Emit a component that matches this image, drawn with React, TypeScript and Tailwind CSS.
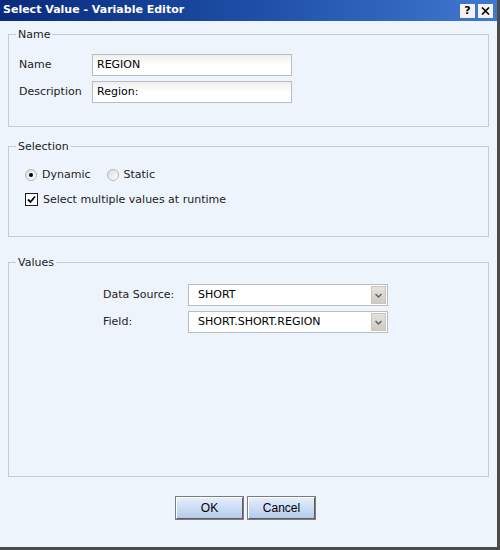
import React, { useState } from 'react';

const FONT = { fontFamily: '"DejaVu Sans", Verdana, sans-serif' };

function SelectBox({ value }: { value: string }) {
  return (
    <div className="flex h-[22px] w-[200px] items-stretch border border-[#b9bcc2] bg-white p-px">
      <span className="flex-1 pl-2 text-[11px] leading-[18px] text-black">{value}</span>
      <span className="flex w-[15px] items-center justify-center border border-[#c9c5bc] bg-gradient-to-b from-[#e6e3dc] to-[#cfcbc2]">
        <svg width="7" height="5" viewBox="0 0 7 5">
          <path d="M0.5 1 L3.5 4 L6.5 1" fill="none" stroke="#55606e" strokeWidth="1.4" />
        </svg>
      </span>
    </div>
  );
}

function TextBox({ value }: { value: string }) {
  return (
    <div className="h-[22px] w-[200px] border border-[#b9bcc2] bg-gradient-to-b from-[#efefed] via-white to-white pl-1 text-[11px] leading-[20px] text-black">
      {value}
    </div>
  );
}

function Group({ title, className, children }: { title: string; className: string; children?: React.ReactNode }) {
  return (
    <fieldset className={`mx-2 border border-[#c6cad2] ${className}`}>
      <legend className="ml-[7px] px-[2px] text-[11px] leading-[13px] text-[#222]">{title}</legend>
      {children}
    </fieldset>
  );
}

function DialogButton({ label }: { label: string }) {
  return (
    <button className="h-[22px] w-[67px] border border-t-white border-l-white border-r-[#5e5e5e] border-b-[#5e5e5e] bg-gradient-to-b from-[#e4eefc] to-[#b5cbec] text-[12px] text-black outline outline-1 outline-[#7c7c7c]"
      style={{ fontFamily: '"Liberation Sans", Arial, sans-serif' }}>
      {label}
    </button>
  );
}

function Radio({ checked }: { checked: boolean }) {
  return (
    <span className="flex h-[12px] w-[12px] items-center justify-center rounded-full border border-[#b6b6b6] bg-gradient-to-br from-[#dcdcdc] to-white">
      {checked && <span className="h-[4px] w-[4px] rounded-full bg-black" />}
    </span>
  );
}

export default function App() {
  const [mode, setMode] = useState<'dynamic' | 'static'>('dynamic');
  const [multi, setMulti] = useState(true);

  return (
    <div className="flex h-[550px] w-[500px] flex-col border-r-[3px] border-b-[3px] border-r-[#4a4a4a] border-b-[#4a4a4a] bg-[#eef4fc]" style={FONT}>
      {/* title bar */}
      <div className="flex h-[21px] items-center justify-between bg-gradient-to-r from-[#0a2a7c] via-[#1d4ea6] to-[#4178cf] pl-[3px] pr-[4px]">
        <span className="text-[11px] font-bold text-white">Select Value - Variable Editor</span>
        <div className="flex gap-[3px]">
          <span className="flex h-[14px] w-[15px] items-center justify-center bg-[#f2f2f2] text-[11px] font-bold leading-none text-black">?</span>
          <span className="flex h-[14px] w-[15px] items-center justify-center bg-[#f2f2f2]">
            <svg width="9" height="8" viewBox="0 0 9 8">
              <path d="M1 0.5 L8 7.5 M8 0.5 L1 7.5" stroke="#000" strokeWidth="1.6" />
            </svg>
          </span>
        </div>
      </div>

      <Group title="Name" className="mt-[7px] h-[99px] pt-[13px]">
        <div className="grid grid-cols-[73px_200px] gap-y-[5px] pl-[10px]">
          <span className="text-[11px] leading-[22px] text-[#222]">Name</span>
          <TextBox value="REGION" />
          <span className="text-[11px] leading-[22px] text-[#222]">Description</span>
          <TextBox value="Region:" />
        </div>
      </Group>

      <Group title="Selection" className="mt-[13px] h-[97px] pt-[14px]">
        <div className="flex flex-col gap-[8px] pl-[16px] text-[11px] text-[#222]">
          <div className="flex items-center">
            <label className="flex items-center gap-[5px]" onClick={() => setMode('dynamic')}>
              <Radio checked={mode === 'dynamic'} />
              Dynamic
            </label>
            <label className="ml-[16px] flex items-center gap-[5px]" onClick={() => setMode('static')}>
              <Radio checked={mode === 'static'} />
              Static
            </label>
          </div>
          <label className="flex items-center gap-[5px]" onClick={() => setMulti(!multi)}>
            <span className="flex h-[13px] w-[13px] items-center justify-center border border-[#1c1c1c] bg-white">
              {multi && (
                <svg width="9" height="9" viewBox="0 0 9 9">
                  <path d="M1 4.5 L3.5 7 L8 1.5" fill="none" stroke="#000" strokeWidth="1.8" />
                </svg>
              )}
            </span>
            Select multiple values at runtime
          </label>
        </div>
      </Group>

      <Group title="Values" className="mt-[19px] h-[221px] pt-[15px]">
        <div className="grid grid-cols-[85px_200px] items-center gap-y-[5px] pl-[94px] text-[11px] text-[#222]">
          <span>Data Source:</span>
          <SelectBox value="SHORT" />
          <span>Field:</span>
          <SelectBox value="SHORT.SHORT.REGION" />
        </div>
      </Group>

      <div className="mt-[20px] flex justify-center gap-[5px] pr-[6px]">
        <DialogButton label="OK" />
        <DialogButton label="Cancel" />
      </div>
    </div>
  );
}
